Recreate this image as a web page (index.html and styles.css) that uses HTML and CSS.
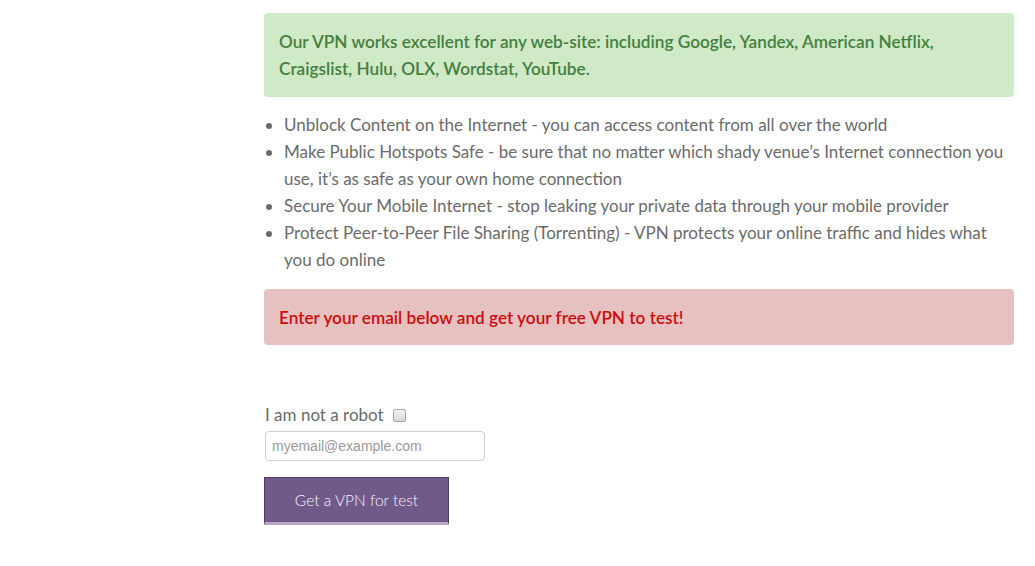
FILE: index.html
```html
<!DOCTYPE html>
<html lang="en">
<head>
<meta charset="utf-8">
<title>Free VPN test</title>
<link rel="stylesheet" href="styles.css">
</head>
<body>
<main class="content">
  <div class="alert alert-success">Our VPN works excellent for any web-site: including Google, Yandex, American Netflix, Craigslist, Hulu, OLX, Wordstat, YouTube.</div>
  <ul class="features">
    <li>Unblock Content on the Internet - you can access content from all over the world</li>
    <li>Make Public Hotspots Safe - be sure that no matter which shady venue’s Internet connection you use, it’s as safe as your own home connection</li>
    <li>Secure Your Mobile Internet - stop leaking your private data through your mobile provider</li>
    <li>Protect Peer-to-Peer File Sharing (Torrenting) - VPN protects your online traffic and hides what you do online</li>
  </ul>
  <div class="alert alert-danger">Enter your email below and get your free VPN to test!</div>
  <form class="signup">
    <label class="robot">I am not a robot <input type="checkbox" class="robot-check"></label>
    <input type="email" class="email" placeholder="myemail@example.com">
    <button type="button" class="btn">Get a VPN for test</button>
  </form>
</main>
</body>
</html>
```
FILE: styles.css
```css
html, body {
  margin: 0;
  padding: 0;
  background: #fff;
}
body {
  font-family: Lato, "Open Sans", sans-serif;
  font-size: 17px;
  line-height: 27px;
  color: #6b6b6b;
}
.content {
  width: 750px;
  margin-left: 264px;
  padding-top: 13px;
}
.alert {
  border-radius: 4px;
  padding: 15px 15px;
  font-weight: 600;
  font-size: 17.2px;
}
.alert-success {
  background: #d0e9c6;
  color: #43803f;
  padding-right: 60px;
}
.alert-danger {
  background: #e7c0c0;
  color: #cc0c0c;
  padding: 15px 15px 14px;
}
.features {
  margin: 14px 0 16px;
  padding-left: 20px;
}
.signup {
  display: flex;
  flex-direction: column;
  align-items: flex-start;
  padding-top: 56px;
}
.robot {
  display: flex;
  align-items: center;
  gap: 9px;
  padding-left: 1px;
  line-height: 27px;
}
.robot-check {
  -webkit-appearance: none;
  appearance: none;
  box-sizing: border-box;
  width: 13px;
  height: 13px;
  margin: 1px 0 0;
  border: 1px solid #a6a6a6;
  border-radius: 2px;
  background: linear-gradient(#f2f2f2, #d8d8d8);
}
.email {
  box-sizing: border-box;
  width: 220px;
  height: 30px;
  margin: 3px 0 0 1px;
  padding: 4px 6px;
  border: 1px solid #cfcfcf;
  border-radius: 4px;
  font-family: "Liberation Sans", Arial, sans-serif;
  font-size: 14px;
  color: #555;
}
.email::placeholder {
  color: #9a9a9a;
}
.btn {
  box-sizing: border-box;
  margin-top: 16px;
  width: 185px;
  height: 48px;
  padding: 0;
  border: 1px solid #4e3b63;
  border-bottom: 3px solid #b7a6c8;
  background: #71598a;
  color: #f7f4fb;
  font-family: Lato, sans-serif;
  font-size: 15.5px;
  font-weight: 300;
}
```
